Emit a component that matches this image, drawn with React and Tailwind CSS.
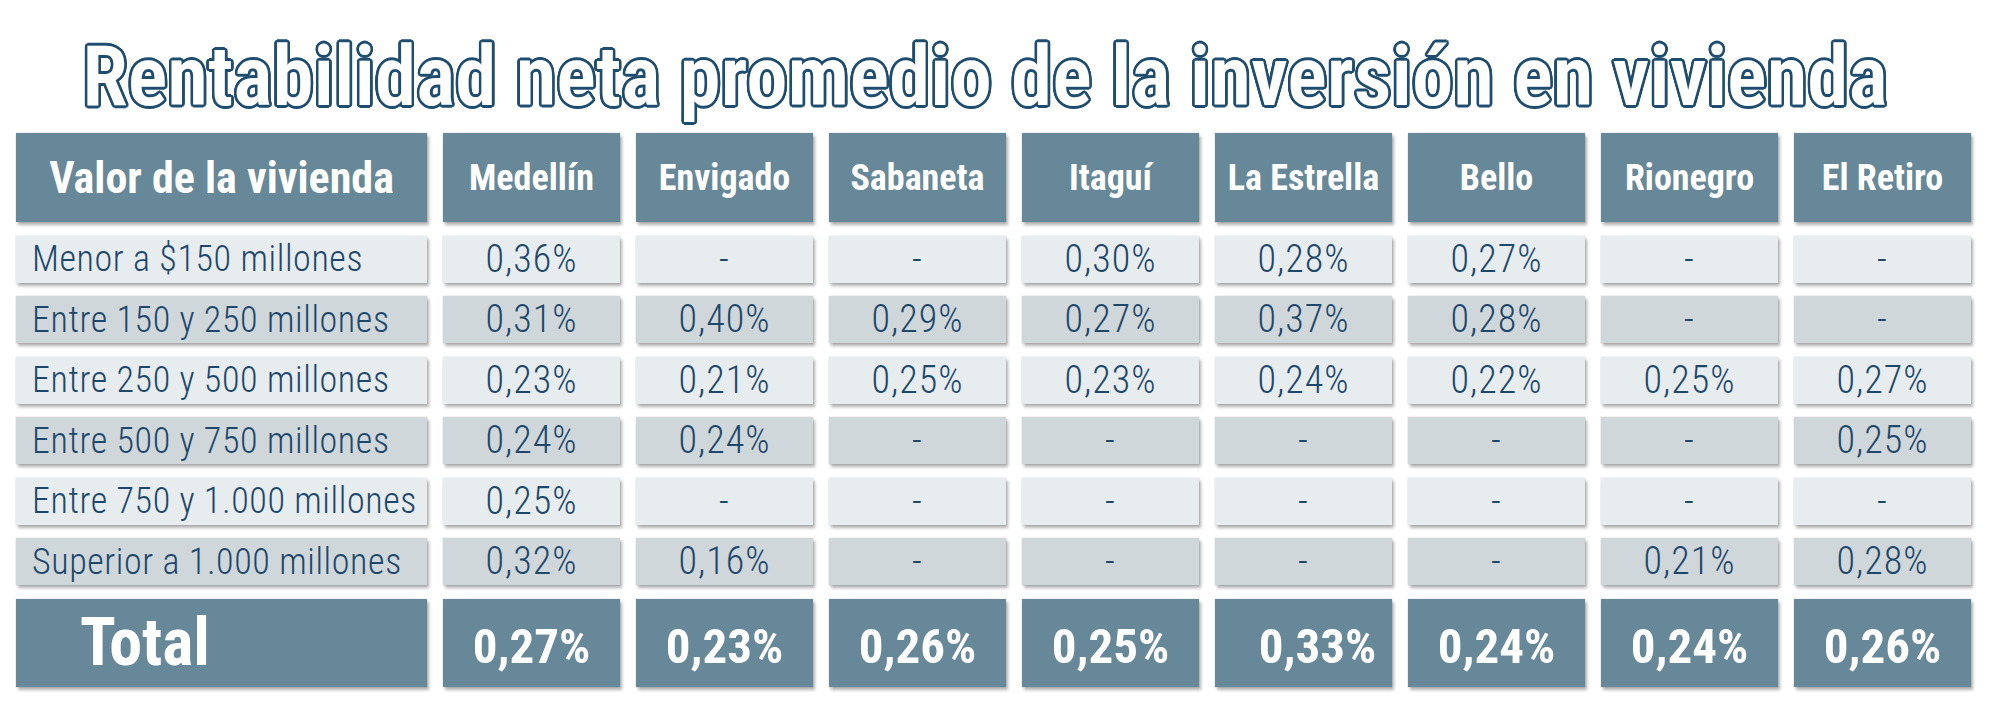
import React from 'react';

const cities = ['Medellín', 'Envigado', 'Sabaneta', 'Itaguí', 'La Estrella', 'Bello', 'Rionegro', 'El Retiro'];

const rows = [
  { label: 'Menor a $150 millones', values: ['0,36%', '-', '-', '0,30%', '0,28%', '0,27%', '-', '-'] },
  { label: 'Entre 150 y 250 millones', values: ['0,31%', '0,40%', '0,29%', '0,27%', '0,37%', '0,28%', '-', '-'] },
  { label: 'Entre 250 y 500 millones', values: ['0,23%', '0,21%', '0,25%', '0,23%', '0,24%', '0,22%', '0,25%', '0,27%'] },
  { label: 'Entre 500 y 750 millones', values: ['0,24%', '0,24%', '-', '-', '-', '-', '-', '0,25%'] },
  { label: 'Entre 750 y 1.000 millones', values: ['0,25%', '-', '-', '-', '-', '-', '-', '-'] },
  { label: 'Superior a 1.000 millones', values: ['0,32%', '0,16%', '-', '-', '-', '-', '0,21%', '0,28%'] },
];

const totals = ['0,27%', '0,23%', '0,26%', '0,25%', '0,33%', '0,24%', '0,24%', '0,26%'];

const shadow = 'shadow-[2px_3px_3px_rgba(0,0,0,0.3),0_0_1px_rgba(0,0,0,0.3)]';

export default function App() {
  return (
    <div className="w-[1994px] h-[701px] bg-white [font-family:Roboto,sans-serif] font-stretch-condensed text-[#1e486b]">
      {/* Title, white letters with a dark outline */}
      <div className="h-[133px] pt-[35px] pr-[24px] text-center">
        <h1 className="text-[83px] leading-none font-semibold text-white whitespace-nowrap [text-shadow:2.6px_0_0_#1f4d6f,-2.6px_0_0_#1f4d6f,0_2.6px_0_#1f4d6f,0_-2.6px_0_#1f4d6f,1.8px_1.8px_0_#1f4d6f,-1.8px_1.8px_0_#1f4d6f,1.8px_-1.8px_0_#1f4d6f,-1.8px_-1.8px_0_#1f4d6f,2.4px_1px_0_#1f4d6f,-2.4px_1px_0_#1f4d6f,2.4px_-1px_0_#1f4d6f,-2.4px_-1px_0_#1f4d6f,1px_2.4px_0_#1f4d6f,-1px_2.4px_0_#1f4d6f,1px_-2.4px_0_#1f4d6f,-1px_-2.4px_0_#1f4d6f]">
          Rentabilidad neta promedio de la inversión en vivienda
        </h1>
      </div>

      {/* Table */}
      <div className="pl-4 grid grid-cols-[411px_repeat(8,177px)] gap-x-4 gap-y-[13.5px]">
        {/* Header */}
        <div className={`h-[89px] flex items-center justify-center bg-[#678899] text-white font-bold text-[44px] whitespace-nowrap ${shadow}`}>
          Valor de la vivienda
        </div>
        {cities.map((city) => (
          <div key={city} className={`h-[89px] flex items-center justify-center bg-[#678899] text-white font-bold text-[36px] whitespace-nowrap ${shadow}`}>
            {city}
          </div>
        ))}

        {/* Rows */}
        {rows.map((row, i) => {
          const bg = i % 2 === 0 ? 'bg-[#e7ecef]' : 'bg-[#d0d7db]';
          return (
            <React.Fragment key={row.label}>
              <div className={`h-[47px] flex items-center pl-4 font-light text-[36px] tracking-[0.6px] whitespace-nowrap ${bg} ${shadow}`}>
                {row.label}
              </div>
              {row.values.map((v, j) => (
                <div key={j} className={`h-[47px] flex items-center justify-center font-light text-[38px] tracking-[1px] ${bg} ${shadow}`}>
                  {v}
                </div>
              ))}
            </React.Fragment>
          );
        })}

        {/* Total */}
        <div className={`h-[88px] flex items-center pl-16 bg-[#678899] text-white font-bold text-[66px] ${shadow}`}>
          Total
        </div>
        {totals.map((t, j) => (
          <div key={j} className={`h-[88px] flex items-center justify-center pt-2 bg-[#678899] text-white font-bold text-[49px] ${j === 4 ? 'pl-7' : ''} ${shadow}`}>
            {t}
          </div>
        ))}
      </div>
    </div>
  );
}
